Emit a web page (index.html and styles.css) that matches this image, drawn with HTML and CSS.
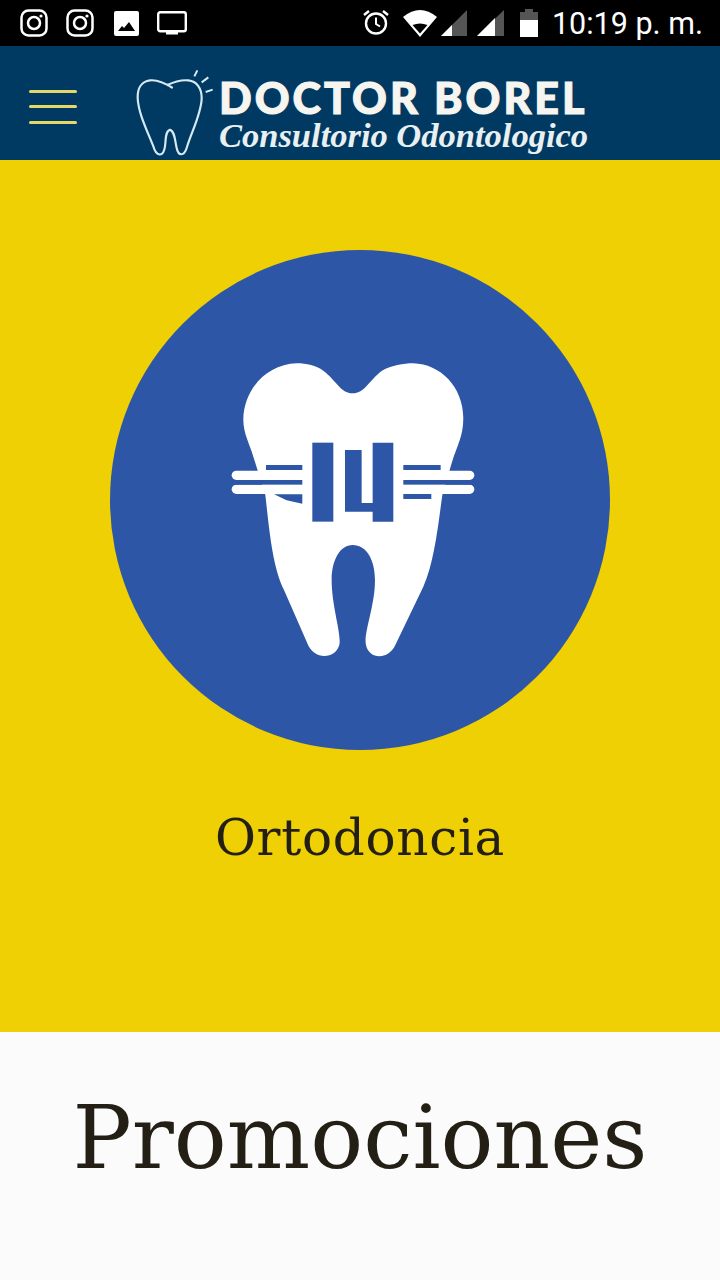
FILE: index.html
```html
<!DOCTYPE html>
<html lang="en">
<head>
    <meta charset="UTF-8">
    <meta name="viewport" content="width=device-width, initial-scale=1.0">
    <title>Doctor Borel</title>
    <link rel="stylesheet" href="styles.css">
</head>
<body>
    <div class="status-bar">
        <div class="status-left">
            <svg class="icon" width="28" height="28" viewBox="1 1 28 28"><rect x="2.500" y="2.500" width="25" height="25" rx="7" fill="none" stroke="#fff" stroke-width="2.500"/><circle cx="15" cy="15" r="6" fill="none" stroke="#fff" stroke-width="2.500"/><circle cx="22" cy="8" r="1.600" fill="#fff"/></svg>
            <svg class="icon" width="28" height="28" viewBox="1 1 28 28"><rect x="2.500" y="2.500" width="25" height="25" rx="7" fill="none" stroke="#fff" stroke-width="2.500"/><circle cx="15" cy="15" r="6" fill="none" stroke="#fff" stroke-width="2.500"/><circle cx="22" cy="8" r="1.600" fill="#fff"/></svg>
            <svg class="icon picture" width="25" height="25" viewBox="0 0 25 25"><rect width="25" height="25" rx="2" fill="#fff"/><path d="M4 20l4-5 2 2 5-6 6 9z" fill="#000"/></svg>
            <svg class="icon" width="30" height="25" viewBox="0 0 30 25"><rect x="1.200" y="1.200" width="27.600" height="19" rx="2" fill="none" stroke="#fff" stroke-width="2.400"/><rect x="9" y="20" width="12" height="3.500" fill="#fff"/></svg>
        </div>
        <div class="status-right">
            <svg class="icon alarm" width="28" height="28" viewBox="1 2 28 28"><circle cx="15" cy="16.500" r="10" fill="none" stroke="#fff" stroke-width="2.400"/><path d="M15 10.500v6.500l4 2.500" fill="none" stroke="#fff" stroke-width="2"/><path d="M3 8l5-4M27 8l-5-4" stroke="#fff" stroke-width="2.400"/></svg>
            <svg class="icon wifi" width="34" height="28" viewBox="0 0 34 28"><path d="M0 8Q17-6 34 8L17 28z" fill="#fff"/><path d="M9.500 16Q17 13 24.500 16L17 24.500z" fill="#000"/></svg>
            <svg class="icon signal-a" width="26" height="28" viewBox="0 0 26 28"><path d="M26 1V27H0z" fill="#555"/><path d="M11 16V27H0z" fill="#fff"/></svg>
            <svg class="icon signal-b" width="27" height="28" viewBox="0 0 27 28"><path d="M27 1V27H0z" fill="#555"/><path d="M18 9V27H0z" fill="#fff"/></svg>
            <svg class="icon battery" width="18" height="28" viewBox="0 0 18 28"><path d="M5 0h8v3h5v8H0V3h5z" fill="#555"/><rect y="11" width="18" height="17" fill="#fff"/></svg>
            <span class="clock">10:19 p. m.</span>
        </div>
    </div>

    <header class="site-header">
        <div class="menu-btn">
            <span></span>
            <span></span>
            <span></span>
        </div>
        <div class="logo">
            <svg class="logo-tooth" width="80" height="90" viewBox="405 205 240 270">
                <path d="M518 265C495 250 470 240 450 242C425 245 412 265 413 295C415 340 440 390 460 440C468 470 490 475 495 440C498 420 495 395 510 390C525 395 525 425 530 445C535 470 552 470 560 445C575 395 605 340 605 295C605 265 590 245 565 242C545 240 525 245 500 257" fill="none" stroke="#d5eaf2" stroke-width="6.500"/>
                <path d="M583 230L592 212M605 248L625 233M617 277L638 270" fill="none" stroke="#d5eaf2" stroke-width="6"/>
            </svg>
            <div class="logo-text">
                <div class="logo-name">DOCTOR BOREL</div>
                <div class="logo-sub">Consultorio Odontologico</div>
            </div>
        </div>
    </header>

    <section class="service">
        <svg class="service-icon" width="500" height="500" viewBox="0 0 500 500">
            <circle cx="250" cy="250" r="250" fill="#2d57a6"/>
            <g transform="translate(100 100) scale(.3333)">
                <path d="M428 130C392 130 378 90 340 62C318 47 290 40 260 40C170 42 100 120 100 210C100 250 118 280 130 320L166 435C176 520 186 650 222 720L292 880C310 930 375 930 388 885C395 850 365 770 365 690C365 630 390 585 428 585C470 585 495 630 495 690C495 770 460 850 468 885C478 930 535 930 556 885L640 710C672 640 684 530 697 435L725 340C740 290 760 260 760 205C760 110 690 42 610 40C580 40 545 47 516 62C478 90 464 130 428 130z" fill="#fff"/>
                <rect x="65" y="362" width="728" height="28" rx="14" fill="#fff"/>
                <rect x="65" y="404" width="728" height="28" rx="14" fill="#fff"/>
                <g fill="#2d57a6">
                    <rect x="72" y="390" width="205" height="14"/>
                    <rect x="580" y="390" width="203" height="14"/>
                    <rect x="168" y="345" width="109" height="15"/>
                    <rect x="580" y="345" width="112" height="15"/>
                    <rect x="580" y="432" width="84" height="15"/>
                    <path d="M192 433H277V461L230 451z"/>
                    <rect x="307" y="278" width="63" height="237"/>
                    <path d="M405 300H455V459H488V278H550V515H488V485H405z"/>
                </g>
            </g>
        </svg>
        <p class="service-name">Ortodoncia</p>
    </section>

    <section class="promos">
        <h2>Promociones</h2>
    </section>
</body>
</html>
```

FILE: styles.css
```css
body {
    margin: 0;
    height: 1280px;
    overflow: hidden;
    font-family: "DejaVu Serif", serif;
    background-color: #fbfbfb;
}
.icon {
    display: block;
}
.status-bar {
    height: 46px;
    background-color: #000;
    display: flex;
    align-items: center;
    justify-content: space-between;
    padding: 0 17px 0 20px;
    box-sizing: border-box;
}
.status-left, .status-right {
    display: flex;
    align-items: center;
}
.status-left {
    gap: 18px;
}
.picture {
    margin-left: 2px;
}
.wifi {
    margin-left: 13px;
}
.signal-a {
    margin-left: 4px;
}
.signal-b {
    margin-left: 10px;
}
.battery {
    margin-left: 16px;
}
.clock {
    color: #fff;
    font-family: Roboto, sans-serif;
    font-size: 30.500px;
    margin-left: 14px;
    white-space: nowrap;
}
.site-header {
    height: 114px;
    background-color: #003a63;
    display: flex;
    align-items: flex-start;
    padding-left: 29px;
}
.menu-btn {
    width: 48px;
    margin-top: 44px;
    display: flex;
    flex-direction: column;
    gap: 12.300px;
}
.menu-btn span {
    display: block;
    height: 3px;
    background-color: #e5d868;
    border-radius: 2px;
}
.logo {
    display: flex;
    align-items: flex-start;
    margin: 22px 0 0 58px;
}
.logo-text {
    margin: 9px 0 0 4px;
}
.logo-name {
    color: #f7f5ef;
    font-family: Lato, sans-serif;
    font-weight: 900;
    font-size: 43px;
    line-height: 42px;
    letter-spacing: 3px;
    -webkit-text-stroke: 1.100px #f7f5ef;
    white-space: nowrap;
}
.logo-sub {
    color: #e8f0f2;
    font-family: "Liberation Serif", serif;
    font-weight: 700;
    font-style: italic;
    font-size: 34.500px;
    line-height: 32px;
    white-space: nowrap;
}
.service {
    height: 872px;
    background-color: #eed004;
    display: flex;
    flex-direction: column;
    align-items: center;
    padding-top: 90px;
    box-sizing: border-box;
}
.service-icon {
    display: block;
}
.service-name {
    margin: 56px 0 0;
    color: #231f14;
    font-size: 50px;
    line-height: 64px;
    letter-spacing: 0.700px;
}
.promos {
    height: 248px;
    background-color: #fbfbfb;
    text-align: center;
}
.promos h2 {
    margin: 0;
    padding-top: 54px;
    color: #231f14;
    font-weight: 400;
    font-size: 88px;
    line-height: 104px;
}
```
